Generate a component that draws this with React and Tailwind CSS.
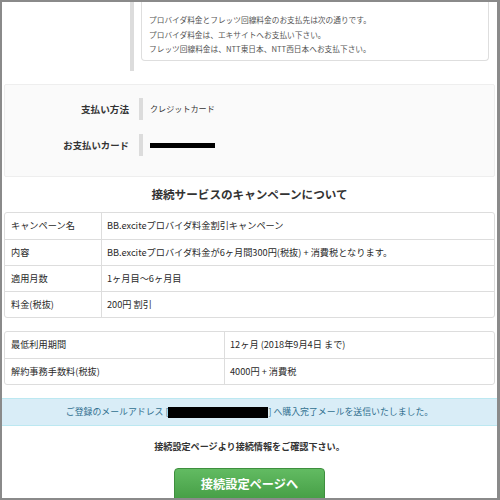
import React from "react";

const font = { fontFamily: '"Noto Sans CJK JP", "Noto Sans", sans-serif' };

export default function App() {
  return (
    <div
      className="w-[500px] h-[500px] overflow-hidden bg-white border-l-2 border-t-2 border-r-[3px] border-b-2 border-[#8a8a8a] text-[#333]"
      style={font}
    >
      {/* top notice box */}
      <div className="flex h-[69px]">
        <div className="w-[128px]" />
        <div className="w-[4px] bg-[#dcdcdc] h-full" />
        <div className="pl-[7px] w-[355px]">
          <div className="border border-t-0 border-[#dedede] rounded-b-[4px] h-[59px] pt-[11px] pl-[7px] text-[7.7px] leading-[14.5px] text-[#555]">
            <p>プロバイダ料金とフレッツ回線料金のお支払先は次の通りです。</p>
            <p>プロバイダ料金は、エキサイトへお支払い下さい。</p>
            <p>フレッツ回線料金は、NTT東日本、NTT西日本へお支払下さい。</p>
          </div>
        </div>
      </div>

      {/* payment panel */}
      <div className="mx-[2px] mt-[13px] h-[93px] bg-[#fafafa] border border-[#eeeeee] rounded-[2px] pt-[13px]">
        <div className="flex items-center h-[22px]">
          <div className="w-[124px] text-right font-bold text-[9.6px]">支払い方法</div>
          <div className="ml-[10px] w-[4px] h-[22px] bg-[#dcdcdc]" />
          <div className="pl-[7px] text-[8.1px]">クレジットカード</div>
        </div>
        <div className="flex items-center h-[22px] mt-[14px]">
          <div className="w-[124px] text-right font-bold text-[9.4px]">お支払いカード</div>
          <div className="ml-[10px] w-[4px] h-[22px] bg-[#dcdcdc]" />
          <div className="pl-[7px]">
            <div className="w-[65px] h-[5px] bg-black" />
          </div>
        </div>
      </div>

      {/* title */}
      <div className="h-[35px] flex items-center justify-center font-bold text-[11.6px] text-[#333]">
        接続サービスのキャンペーンについて
      </div>

      {/* campaign table */}
      <div className="mx-[2px] border border-[#dddddd] rounded-[3px] text-[9.2px] text-[#2a2a2a]">
        {[
          ["キャンペーン名", "BB.exciteプロバイダ料金割引キャンペーン"],
          ["内容", "BB.exciteプロバイダ料金が6ヶ月間300円(税抜) + 消費税となります。"],
          ["適用月数", "1ヶ月目〜6ヶ月目"],
          ["料金(税抜)", "200円 割引"],
        ].map(([k, v], i) => (
          <div key={i} className={`flex h-[26px] ${i > 0 ? "border-t border-[#dddddd]" : ""}`}>
            <div className="w-[97px] border-r border-[#dddddd] flex items-center pl-[6px]">{k}</div>
            <div className="flex-1 flex items-center pl-[5px]">{v}</div>
          </div>
        ))}
      </div>

      {/* min period table */}
      <div className="mx-[2px] mt-[13px] border border-[#dddddd] rounded-[3px] text-[9.2px] text-[#2a2a2a]">
        {[
          ["最低利用期間", "12ヶ月 (2018年9月4日 まで)"],
          ["解約事務手数料(税抜)", "4000円 + 消費税"],
        ].map(([k, v], i) => (
          <div key={i} className={`flex h-[26px] ${i > 0 ? "border-t border-[#dddddd]" : ""}`}>
            <div className="w-[220px] border-r border-[#dddddd] flex items-center pl-[6px]">{k}</div>
            <div className="flex-1 flex items-center pl-[5px]">{v}</div>
          </div>
        ))}
      </div>

      {/* info alert */}
      <div className="mt-[13px] h-[28px] bg-[#d9edf7] border-y border-[#bce8f1] flex items-center justify-center text-[8.9px] text-[#31708f]">
        <span>ご登録のメールアドレス [</span>
        <span className="inline-block w-[100px] h-[11px] bg-black" />
        <span>] へ購入完了メールを送信いたしました。</span>
      </div>

      {/* confirm text */}
      <div className="h-[42px] flex items-center justify-center font-bold text-[9.1px] text-[#333]">
        接続設定ページより接続情報をご確認下さい。
      </div>

      {/* button */}
      <div className="flex justify-center">
        <div className="w-[151px] h-[34px] rounded-[4px] border border-[#3e8f3e] bg-gradient-to-b from-[#62bb62] to-[#449d44] text-white text-[12.2px] font-bold flex items-center justify-center pb-[2px]">
          接続設定ページへ
        </div>
      </div>
    </div>
  );
}
